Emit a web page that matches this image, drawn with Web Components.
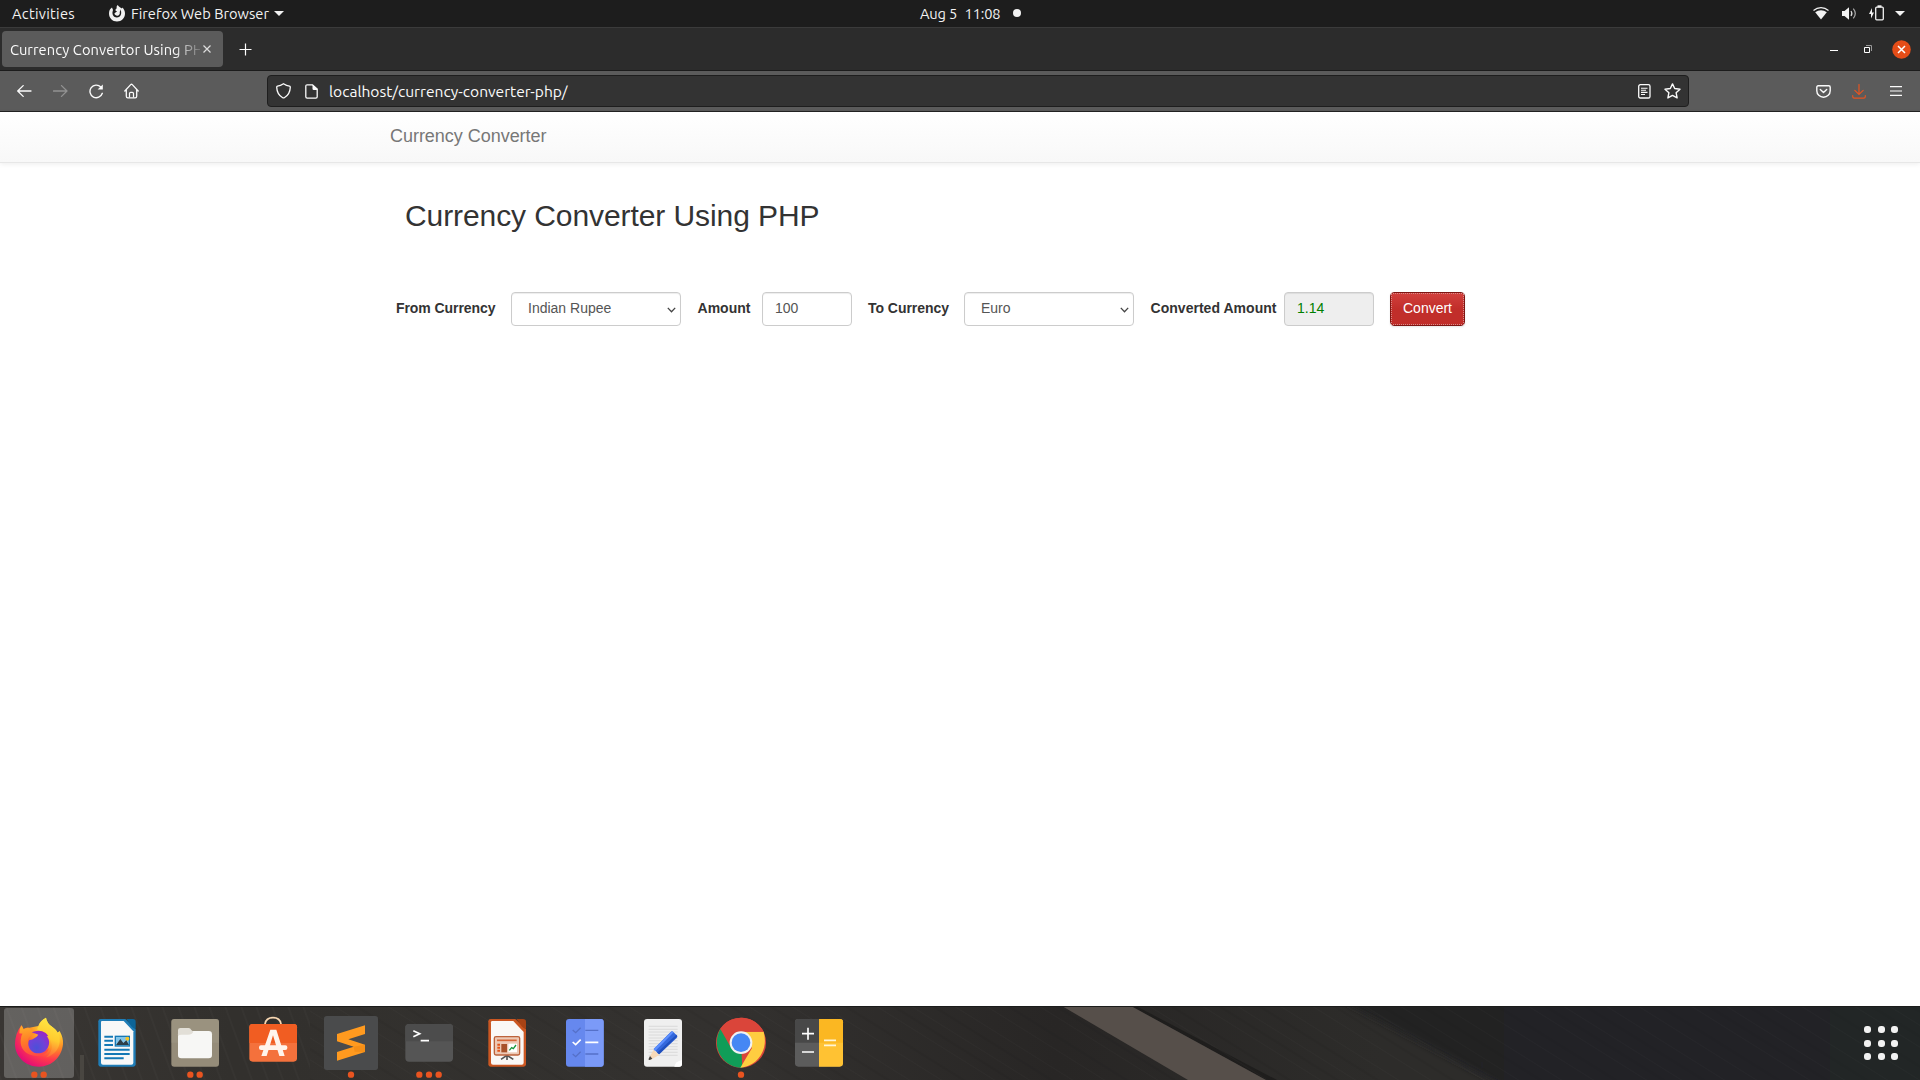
<!DOCTYPE html>
<html lang="en">
<head>
<meta charset="utf-8">
<title>Currency Convertor Using PHP</title>
<style>
html,body{margin:0;height:100%;overflow:hidden;background:#fff}
body{font-family:Ubuntu,"Noto Sans","Open Sans",sans-serif}
</style>
</head>
<body>
<desktop-screen></desktop-screen>
<script>
const define = (name, html, setup) => {
  const tpl = document.createElement('template');
  tpl.innerHTML = html;
  customElements.define(name, class extends HTMLElement {
    constructor() {
      super();
      this.attachShadow({mode: 'open'}).append(tpl.content.cloneNode(true));
    }
    connectedCallback() { if (setup) setup(this, this.shadowRoot); }
  });
};

/* Text tracked so that it fills the width given in its "w" attribute. */
define('fit-text', `<style>:host{display:block;white-space:pre;flex:none}span{display:inline-block}</style><span><slot></slot></span>`, (el, root) => {
  const span = root.querySelector('span');
  const want = parseFloat(el.getAttribute('w'));
  span.style.letterSpacing = '0';
  const natural = span.getBoundingClientRect().width;
  span.style.letterSpacing = ((want - natural) / el.textContent.length) + 'px';
  el.style.width = want + 'px';
});

const glyphs = {
  ff: [16,17,'<path d="M8.700 0c-1 1-1.400 2-.9 3.200C6.800 3.700 6.300 4.600 6.600 5.700L8 6.300c-.4.900-1.600 1.100-2.600 2.200.4 1.500 1.800 2.400 3.200 2.200 1.900-.3 2.600-2 2.100-3.700.6-.7.700-1.800.3-2.700 1.200 1.300 1.500 3.300 1 5-.7 2.200-2.400 3.400-4.300 3.300-2.900-.1-4.600-2.600-4.200-5.500L4 5 3 2.500C.8 3.800 0 6.200 0 8.500 0 13 3.500 16.500 8 16.500s8-3.500 8-8c0-2.500-1-4.700-2.600-6.100L13 3.600C12 2.500 9.800 2.200 8.700 0z" fill="#f2f2f2"/>'],
  tri: [10,5,'<path d="M0 0h10L5 5z" fill="#f2f2f2"/>'],
  wifi: [16,13,'<path d="M.5 3.500C5-.3 11-.3 15.500 3.500" fill="none" stroke="#f2f2f2" stroke-width="1.200"/><path d="M2.200 5.300C5.600 2.600 10.400 2.600 13.800 5.300L8 12.500z" fill="#f2f2f2"/>'],
  sound: [15,13,'<path d="M0 4h2.500L7 .3v12.400L2.500 9H0z" fill="#f2f2f2"/><path d="M9 4q1.800 2.500 0 5" fill="none" stroke="#ddd" stroke-width="1.200"/><path d="M11.300 1.700q4 4.800 0 9.600" fill="none" stroke="#aaa" stroke-width="1.200"/>'],
  battery: [15,16,'<path d="M3 3 0 9h2v4.500L5 7.500H3z" fill="#f2f2f2"/><path d="M6.700 3.200q0-1 1-1h5.600q1 0 1 1v10.600q0 1-1 1H7.700q-1 0-1-1z" fill="none" stroke="#f2f2f2" stroke-width="1.300"/><path d="M8.500.3h4v2h-4z" fill="#f2f2f2"/>'],
  x: [8,8,'<path d="m.5.5 7 7m0-7-7 7" stroke="#ddd" stroke-width="1.200"/>'],
  plus: [13,13,'<path d="M6.500 .5v12M.5 6.500h12" stroke="#fff" stroke-width="1.200"/>'],
  min: [8,2,'<path d="M0 .5h8" stroke="#fff"/>'],
  restore: [8,8,'<path d="M.5 2.500h5v5h-5z" stroke="#fff" fill="none"/><path d="M2 .5h5.500V6" stroke="#999" fill="none"/>'],
  close: [19,19,'<circle cx="9.500" cy="9.500" r="9.300" fill="#e54d18"/><path d="m6 6 7 7m0-7-7 7" stroke="#fff" stroke-width="1.500"/>'],
  back: [15,12,'<path d="M14 6H.7M6.200.6.7 6l5.500 5.400" fill="none" stroke="#fbfbfb" stroke-width="1.300" stroke-linecap="round" stroke-linejoin="round"/>'],
  fwd: [15,12,'<path d="M.5 6H14M8.500.6 14 6l-5.500 5.400" fill="none" stroke="#929292" stroke-width="1.300" stroke-linecap="round" stroke-linejoin="round"/>'],
  reload: [15,15,'<path d="M13.300 9.300A6.300 6.300 0 1 1 11.800 3" fill="none" stroke="#fbfbfb" stroke-width="1.400" stroke-linecap="round"/><path d="M13.800.6v5H8.600z" fill="#fbfbfb"/>'],
  home: [15,16,'<path d="M.8 8 6.700 1.600q.8-.8 1.600 0L14.200 8M2.300 6.800v6.400q0 1.600 1.600 1.600h7.200q1.600 0 1.600-1.600V6.800" fill="none" stroke="#fbfbfb" stroke-width="1.300" stroke-linecap="round"/><path d="M5.500 14.500v-4q0-1.200 1.200-1.200h1.600q1.200 0 1.200 1.200v4" fill="none" stroke="#fbfbfb" stroke-width="1.200"/>'],
  shield: [15,16,'<path d="M7.500.8q3 2 6 2.400.8.200.8 1-.3 7.300-6 10.500-.8.500-1.600 0-5.700-3.200-6-10.500 0-.8.800-1Q4.500 2.800 7.500.8z" fill="none" stroke="#fbfbfb" stroke-width="1.300"/>'],
  page: [13,15,'<path d="M7.500.8H2.200Q.8.800.8 2.200v10.600q0 1.400 1.400 1.400h8.600q1.400 0 1.400-1.400V5z" fill="none" stroke="#fbfbfb" stroke-width="1.300"/><path d="M7.500.8 12.200 5v1H8.700Q7.500 6 7.500 4.800z" fill="#fbfbfb"/>'],
  reader: [13,15,'<rect x=".7" y=".7" width="11.300" height="13.300" rx="1.600" fill="none" stroke="#fbfbfb" stroke-width="1.300"/><path d="M3 4.200h6.500M3 6.200h5M3 8.400h6.500M3 10.500h4" stroke="#fbfbfb" stroke-width="1.100"/>'],
  star: [17,16,'<path d="m8.500.9 2.200 4.600 5.300.7-3.900 3.500 1 5.200-4.600-2.500-4.600 2.500 1-5.200L1 6.200l5.300-.7z" fill="none" stroke="#fbfbfb" stroke-width="1.400" stroke-linejoin="round"/>'],
  pocket: [15,13,'<path d="M2.200.8h10.600q1.400 0 1.400 1.400v3.500a6.700 6.500 0 0 1-13.400 0V2.200Q.8.800 2.200.8z" fill="none" stroke="#fbfbfb" stroke-width="1.400"/><path d="m4.300 4.500 3.200 3 3.200-3" fill="none" stroke="#fbfbfb" stroke-width="1.400" stroke-linecap="round" stroke-linejoin="round"/>'],
  down: [14,15,'<path d="M7 .5v9.800M2.800 6.300 7 10.500l4.200-4.200M.7 11.500v1q0 1.600 1.600 1.600h9.400q1.600 0 1.600-1.600v-1" fill="none" stroke="#e55420" stroke-width="1.200" stroke-linecap="round"/>'],
  menu: [12,10,'<path d="M0 .6h12M0 5h12M0 9.400h12" stroke="#fbfbfb" stroke-width="1.200"/>'],
  chev: [9,6,'<path d="m.8.900 3.700 3.900L8.200.9" fill="none" stroke="#444" stroke-width="1.300"/>']
};
define('ui-glyph', `<style>:host{display:block;flex:none;line-height:0}svg{display:block}</style><div></div>`, (el, root) => {
  const [w, h, d] = glyphs[el.getAttribute('name')];
  root.querySelector('div').innerHTML = `<svg width="${w}" height="${h}" viewBox="0 0 ${w} ${h}">${d}</svg>`;
});

define('top-bar', `<style>
:host{display:grid;grid-template-columns:920px 1fr auto;height:28px;background:#1d1d1d;color:#f2f2f2;font-size:14.670px;line-height:26px;border-bottom:1px solid #3b3b3b;box-sizing:border-box}
div{display:flex;align-items:center;height:26px}
fit-text{padding-top:1px}
.dot{width:8px;height:8px;border-radius:50%;background:#f2f2f2;margin-left:12px}
</style>
<div><fit-text w="63" style="margin-left:12px">Activities</fit-text><ui-glyph name="ff" style="margin-left:34px"></ui-glyph><fit-text w="138" style="margin-left:6px">Firefox Web Browser</fit-text><ui-glyph name="tri" style="margin-left:5px"></ui-glyph></div>
<div><fit-text w="37">Aug 5</fit-text><fit-text w="36" style="margin-left:7.500px">11:08</fit-text><span class="dot"></span></div>
<div><ui-glyph name="wifi"></ui-glyph><ui-glyph name="sound" style="margin-left:13px"></ui-glyph><ui-glyph name="battery" style="margin-left:12px"></ui-glyph><ui-glyph name="tri" style="margin:0 15px 0 11px"></ui-glyph></div>`);

define('tab-strip', `<style>
:host{display:flex;align-items:center;height:43px;box-sizing:border-box;background:#2c2c2c;border-bottom:1px solid #1c1c1c}
.tab{display:flex;align-items:center;box-sizing:border-box;width:221px;height:36px;margin:0 0 0 2px;padding-left:8px;background:#5b5b5b;border-radius:4px;color:#fbfbfb;font-size:14.670px}
.label{width:190px;-webkit-mask:linear-gradient(90deg,#000 164px,transparent 195px);mask:linear-gradient(90deg,#000 164px,transparent 195px)}
.win{display:flex;align-items:center;margin-left:auto}
</style>
<div class="tab"><div class="label"><fit-text w="202">Currency Convertor Using PHP</fit-text></div><ui-glyph name="x" style="margin-left:3px"></ui-glyph></div>
<ui-glyph name="plus" style="margin:1px 0 0 16px"></ui-glyph>
<div class="win"><ui-glyph name="min" style="margin-top:4px"></ui-glyph><ui-glyph name="restore" style="margin-left:26px"></ui-glyph><ui-glyph name="close" style="margin:0 9px 0 20px"></ui-glyph></div>`);

define('nav-toolbar', `<style>
:host{display:flex;align-items:center;height:41px;box-sizing:border-box;background:#5b5b5b;border-bottom:1px solid #222;padding-left:17px}
.url{display:flex;align-items:center;box-sizing:border-box;width:1422px;height:32px;margin-left:128px;padding:0 8px;border:1px solid #1e1e1e;border-radius:4px;background:#333;color:#fbfbfb;font-size:15.600px}
.end{display:flex;margin-left:auto;align-items:center}
</style>
<ui-glyph name="back"></ui-glyph><ui-glyph name="fwd" style="margin-left:21px"></ui-glyph><ui-glyph name="reload" style="margin-left:21px"></ui-glyph><ui-glyph name="home" style="margin-left:20px"></ui-glyph>
<div class="url"><ui-glyph name="shield" style="margin-left:-.5px"></ui-glyph><ui-glyph name="page" style="margin-left:14px"></ui-glyph><fit-text w="238.500" style="margin-left:11.500px">localhost/currency-converter-php/</fit-text><div class="end"><ui-glyph name="reader"></ui-glyph><ui-glyph name="star" style="margin-left:13px;margin-right:-1px"></ui-glyph></div></div>
<div class="end"><ui-glyph name="pocket"></ui-glyph><ui-glyph name="down" style="margin-left:21px"></ui-glyph><ui-glyph name="menu" style="margin:0 18px 0 24px"></ui-glyph></div>`);

define('field-box', `<style>
:host{display:flex;align-items:center;box-sizing:border-box;flex:none;width:90px;height:34px;border:1px solid #ccc;border-radius:4px;padding:0 12px;background:#fff;color:#555;line-height:30px;box-shadow:inset 0 1px 1px rgba(0,0,0,.075)}
span{margin-bottom:2px}
:host([kind=select]){width:170px;padding:0 4.500px 0 16px;justify-content:space-between}
:host([kind=result]){background:#eee;color:green}
ui-glyph{display:none;margin-top:2px}:host([kind=select]) ui-glyph{display:block}
</style><span><slot></slot></span><ui-glyph name="chev"></ui-glyph>`);

define('convert-button', `<style>
:host{display:block;flex:none;box-sizing:border-box;width:75px;height:34px;border:1px solid #7d1512;border-radius:4px;background:linear-gradient(#d2403d,#c12e2a 50%,#c12e2a);color:#fff;text-align:center;box-shadow:0 1px 2px rgba(0,0,0,.1)}
div{box-sizing:border-box;height:32px;line-height:28px;border:1px dotted #d88c8a}
</style><div><slot></slot></div>`);

define('currency-page', `<style>
:host{display:block;flex:1;font-family:"Nimbus Sans","Liberation Sans",Arial,sans-serif;font-size:14px;color:#333;background:#fff}
nav{height:50px;border-bottom:1px solid #e7e7e7;background:linear-gradient(#fff,#f8f8f8);box-shadow:0 1px 5px rgba(0,0,0,.075);padding-left:390px;font-size:18px;line-height:48px;color:#777}
h2{margin:36px 0 0 405px;font-size:30px;line-height:33px;font-weight:500}
form{display:flex;align-items:center;margin:60px 0 0 396px;line-height:32px}
label{font-weight:bold;height:34px}
</style>
<nav><fit-text w="156.500">Currency Converter</fit-text></nav>
<h2><fit-text w="414.500" style="font-weight:400">Currency Converter Using PHP</fit-text></h2>
<form>
<label><fit-text w="99.500">From Currency</fit-text></label><field-box kind="select" style="margin-left:15.500px">Indian Rupee</field-box>
<label style="margin-left:16.500px"><fit-text w="53">Amount</fit-text></label><field-box style="margin-left:11.500px">100</field-box>
<label style="margin-left:16px"><fit-text w="81">To Currency</fit-text></label><field-box kind="select" style="margin-left:15px">Euro</field-box>
<label style="margin-left:16.500px"><fit-text w="126">Converted Amount</fit-text></label><field-box kind="result" style="margin-left:7.500px">1.14</field-box>
<convert-button style="margin-left:16px">Convert</convert-button>
</form>`);

/* Dock pictures share a 234 x 222 grid: one 78 x 74 px cell, three units to a pixel. */
const apps = {
  firefox: `<defs><radialGradient id="a" cx=".8" cy=".12" r="1"><stop offset="0" stop-color="#fff44f"/><stop offset=".3" stop-color="#ffc830"/><stop offset=".52" stop-color="#ff8a25"/><stop offset=".73" stop-color="#ff3b4a"/><stop offset="1" stop-color="#e10a7a"/></radialGradient><radialGradient id="b" cx=".4" cy=".75" r=".8"><stop offset="0" stop-color="#4b50d8"/><stop offset=".5" stop-color="#7042d8"/><stop offset="1" stop-color="#a023c0"/></radialGradient><linearGradient id="c" x1=".3" y1="0" x2=".5" y2="1"><stop offset="0" stop-color="#ffae27"/><stop offset=".5" stop-color="#ff7a28"/><stop offset="1" stop-color="#ff4a44"/></linearGradient><linearGradient id="d" x1=".5" y1="0" x2=".3" y2="1"><stop offset="0" stop-color="#ffe944"/><stop offset=".5" stop-color="#ffca2f"/><stop offset="1" stop-color="#ff5b3a"/></linearGradient></defs>
<path d="M64 58q5 5 6 11 9-6 18-4L115 60Q119 45 138 35q2 17 20 29 10 7 14 16l7-5q12 22 10 40c-4 37-32 67-72 67-41 0-72-31-72-68 0-19 6-39 19-56z" fill="url(#a)"/>
<path d="M64 58q5 7 7 12 10-6 18-3 4 7 14 7 7 0 10 2-6 10-17 11-13 7-12 20 1 26 29 29 20 2 34-10-4 20-28 23c-35 5-63-19-56-52 1-10 5-14 5-14l-10-1q-1-12 6-24z" fill="url(#c)"/>
<path d="M116 60Q120 45 138 35q2 17 20 29c17 12 25 30 20 50-4 21-22 36-40 40 17-12 22-33 13-52-8-15-20-17-35-26q-8-5 0-16z" fill="url(#d)"/>
<path d="M95 79q24-10 42 2 6 5 8 10-3-1-5-1 9 10 7 24c-3 18-16 28-33 28-16 0-29-13-29-29q0-7 3-11 8 1 15-5 8-5 12-11-8-3-20-7z" fill="url(#b)"/>`,
  writer: `<path d="M68 39h74l31 30v106q0 7-7 7H68q-7 0-7-7V46q0-7 7-7z" fill="#1f7db7"/><path d="M72 45h65l29 31v94q0 6-6 6H75q-6 0-6-6V48q0-3 3-3z" fill="#f8f8f8"/><path d="M145 39h20q8 0 8 8v20q-5 4-13-6z" fill="#0d6599"/><path d="M79 92h26M79 104h26M79 117h26M79 131h76M79 144h76M79 157h58" stroke="#1478b5" stroke-width="6"/><path d="M110 89h46v33h-46z" fill="#1478b5"/><path d="M114 93h38v25h-38z" fill="#82c4e8"/><circle cx="148" cy="98" r="6" fill="#f5c525"/><path d="m114 117 13-18 9 12 9-8 8 14z" fill="#2c3d48"/>`,
  files: `<rect x="46" y="39" width="143" height="143" rx="9" fill="#958c79"/><path d="M55 39h125q9 0 9 9v62H46V48q0-9 9-9z" fill="#a39b89" opacity=".4"/><rect x="66" y="75" width="102" height="82" rx="10" fill="#f7f7f5"/><path d="M66 90V72q0-6 7-6h25q5 0 8 6l6 5q-4 9-16 9H78q-10 0-12 4z" fill="#e2dfd7"/>`,
  software: `<path d="M93 60V54q3-19 24-19t24 19v6" fill="none" stroke="#f7d7b2" stroke-width="5"/><rect x="46" y="54" width="143" height="113" rx="10" fill="#f4713c"/><path d="M56 54h123q10 0 10 10v47H46V64q0-10 10-10z" fill="#f15d22"/><path d="M109 71h18l25 79h-16l-19-62-19 62H82z" fill="#fff4ec"/><rect x="75" y="118" width="85" height="14" rx="6" fill="#fff4ec"/>`,
  sublime: `<rect x="36" y="30" width="162" height="162" rx="8" fill="#4a4b4c"/><path d="m75 84 84-26v26l-50 16 50 16v22l-84 26v-26l50-16-50-16z" fill="#ff9a1f"/><path d="m125 122 34-6v22l-31-1z" fill="#eb8410" opacity=".5"/>`,
  terminal: `<rect x="46" y="54" width="143" height="113" rx="11" fill="#555"/><path d="M57 54h121q11 0 11 11v41H46V65q0-11 11-11z" fill="#4c4c4c"/><path d="m70 74 19 9-19 9M92 104h25" fill="none" stroke="#fff" stroke-width="5"/>`,
  impress: `<path d="M68 39h74l32 30v106q0 7-7 7H68q-7 0-7-7V46q0-7 7-7z" fill="#cb5722"/><path d="M73 45h63l31 33v92q0 6-6 6H75q-6 0-6-6V49q0-4 4-4z" fill="#faf8f6"/><path d="M145 39h20q9 0 9 8v20q-5 4-13-6z" fill="#a74315"/><path d="m99 160 18-12 19 12m-19-10v12" fill="none" stroke="#555" stroke-width="5"/><rect x="79" y="92" width="76" height="55" rx="5" fill="#edc9b5" stroke="#bd633c" stroke-width="4"/><path d="M87 103h59" stroke="#d56637" stroke-width="5"/><path d="M88 116h8m-8 9h8m-8 9h8" stroke="#e45317" stroke-width="6"/><path d="M100 114h17v25h-17z" fill="#a7522a"/><path d="M121 113h26v26h-26z" fill="#fff"/><path d="m124 133 7-8 5 3 8-11" fill="none" stroke="#19983c" stroke-width="4"/>`,
  todo: `<rect x="60" y="39" width="113" height="143" rx="9" fill="#6688ee"/><path d="M117 39h47q9 0 9 9v125q0 9-9 9h-47z" fill="#7b9af8"/><path d="m80 72 9 8 15-15m-24 79 9 8 15-15M118 73h39m-39 71h39" fill="none" stroke="#5570c8" stroke-width="4"/><path d="m80 108 9 8 15-15m14 8h39" fill="none" stroke="#fff" stroke-width="5"/>`,
  editor: `<rect x="60" y="39" width="114" height="143" rx="9" fill="#efefef"/><path d="M74 61h87m-87 9h87m-87 8h87m-87 9h87m-87 9h87m-87 8h87m-87 9h87m-87 9h87m-87 8h87m-87 9h87m-87 9h87" stroke="#d0d0d0" stroke-width="2"/><path d="M151 182q3-16 23-20v12q0 8-8 8z" fill="#fff"/><path d="m89 131 17 16-26 14q-8 3-5-5z" fill="#f6d9b9"/><path d="m78 150 7 8-8 4q-5 0-3-4z" fill="#444"/><path d="m89 129 51-51q4-4 8 0l10 10q4 4 0 8l-53 49z" fill="#3468dd"/><path d="m89 129 55-53 5 3-56 57z" fill="#5e90ff"/><path d="m99 140 58-54 3 5-54 54z" fill="#2050bd"/>`,
  chrome: `<circle cx="117" cy="110" r="75" fill="#da453a"/><path d="m55 69 62 41 4 75C66 187 24 127 55 69z" fill="#109d58"/><path d="M117 77h68c16 58-22 105-70 108l35-59z" fill="#ffcd40"/><path d="M55 69 84 120l33-43h68A75 75 0 0 0 55 69z" fill="#da453a"/><circle cx="117" cy="110" r="34" fill="#f2f2f2"/><circle cx="117" cy="110" r="28" fill="#4587f4"/>`,
  calc: `<rect x="45" y="39" width="144" height="143" rx="10" fill="#5c5c5c"/><path d="M55 39h62v71H45V49q0-10 10-10z" fill="#484848"/><path d="M117 39h62q10 0 10 10v123q0 10-10 10h-62z" fill="#ffc233"/><path d="M117 39h62q10 0 10 10v61h-72z" fill="#fbb722"/><path d="M84 65v36M66 83h36M66 138h36" stroke="#fff" stroke-width="5"/><path d="M132 103h36m-36 15h36" stroke="#fff5d5" stroke-width="5"/>`
};
const dots = {1: [117], 2: [103, 131], 3: [88, 117, 146]};
define('dock-app', `<style>:host{display:block;flex:none;width:78px;height:74px}svg{display:block}</style><div></div>`, (el, root) => {
  const active = el.hasAttribute('active') ? '<rect x="12" y="6" width="210" height="210" rx="9" fill="#fff" opacity=".22"/>' : '';
  const run = (dots[el.getAttribute('windows')] || []).map(x => `<circle cx="${x}" cy="206" r="9.500" fill="#e95420"/>`).join('');
  root.querySelector('div').innerHTML = `<svg width="78" height="74" viewBox="0 0 234 222">${active}${apps[el.getAttribute('app')]}${run}</svg>`;
});

define('app-dock', `<style>
:host{display:flex;position:relative;height:74px;background:#2d2b29;overflow:hidden}
.wood{position:absolute;inset:0}
.apps{display:flex;position:relative}
.grid{position:relative;display:grid;grid-template-columns:repeat(3,7px);grid-auto-rows:7px;gap:6.500px;margin:20px 22px 0 auto}
.grid i{background:#f2f2f2;border-radius:3px}
</style>
<svg class="wood" width="1920" height="74">
<defs><linearGradient id="w"><stop offset="0" stop-color="#393633"/><stop offset=".12" stop-color="#32302d"/><stop offset=".38" stop-color="#33312f"/><stop offset=".55" stop-color="#282625"/><stop offset=".72" stop-color="#2d2c2a"/></linearGradient>
<linearGradient id="n"><stop offset="0" stop-color="#202124"/><stop offset="1" stop-color="#242627"/></linearGradient>
<filter id="s"><feGaussianBlur stdDeviation="3"/></filter>
<pattern id="g" width="163" height="74" patternUnits="userSpaceOnUse" patternTransform="skewX(58)"><path d="M8 0v74M61 0v74M96 0v74M139 0v74" stroke="#fff" stroke-opacity=".014" stroke-width="2"/><path d="M30 0v74M78 0v74M118 0v74" stroke="#000" stroke-opacity=".04" stroke-width="5"/></pattern>
<pattern id="v" width="47" height="74" patternUnits="userSpaceOnUse" patternTransform="skewX(20)"><path d="M6 0v74M21 0v74M37 0v74" stroke="#fff" stroke-opacity=".025" stroke-width="1.500"/></pattern></defs>
<rect width="1920" height="74" fill="url(#w)"/><path d="M1340 -6H2000V84H1510z" fill="url(#n)" filter="url(#s)"/><path d="M1131 0h5l141 74h-11z" fill="#1f1e1d"/><rect x="310" width="1610" height="74" fill="url(#g)"/><rect width="310" height="74" fill="url(#v)"/>
<path d="M1062 0h69l135 74h-78z" fill="#564f4a"/><path d="M80 49h4v25h-4z" fill="#494641"/><path d="M0 .5h1920" stroke="#1b1c1b"/></svg>
<div class="apps"><dock-app app="firefox" windows="2" active></dock-app><dock-app app="writer"></dock-app><dock-app app="files" windows="2"></dock-app><dock-app app="software"></dock-app><dock-app app="sublime" windows="1"></dock-app><dock-app app="terminal" windows="3"></dock-app><dock-app app="impress"></dock-app><dock-app app="todo"></dock-app><dock-app app="editor"></dock-app><dock-app app="chrome" windows="1"></dock-app><dock-app app="calc"></dock-app></div>
<div class="grid"><i></i><i></i><i></i><i></i><i></i><i></i><i></i><i></i><i></i></div>`);

define('desktop-screen', `<style>:host{display:flex;flex-direction:column;width:1920px;height:1080px;overflow:hidden}top-bar,tab-strip,nav-toolbar,app-dock{flex:none}currency-page{min-height:0}</style>
<top-bar></top-bar><tab-strip></tab-strip><nav-toolbar></nav-toolbar><currency-page></currency-page><app-dock></app-dock>`);
</script>
</body>
</html>
